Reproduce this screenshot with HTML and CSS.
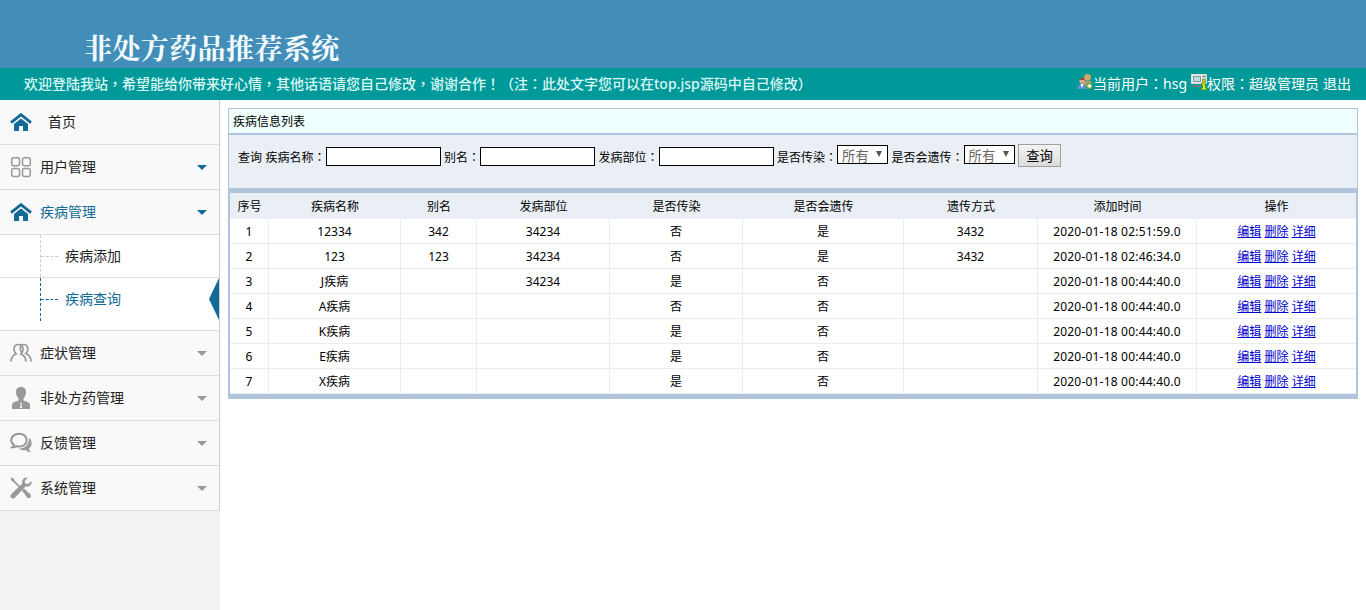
FILE: index.html
```
<!DOCTYPE html>
<html lang="zh-CN">
<head>
    <meta charset="UTF-8">
    <title>非处方药品推荐系统</title>
    <link rel="stylesheet" href="styles.css">
</head>
<body>
    <svg class="symbols" width="0" height="0">
        <symbol id="home" viewBox="0 0 22 18">
            <path d="M1 9.6 11 1.6l10 8" fill="none" stroke="currentColor" stroke-width="2.8"/>
            <path d="M11 5.6 18 11v7h-5v-5H9v5H4v-7z" fill="currentColor"/>
        </symbol>
    </svg>

    <div class="header">
        <h1>非处方药品推荐系统</h1>
    </div>
    <div class="topbar">
        <div class="welcome">欢迎登陆我站<i>，</i>希望能给你带来好心情<i>，</i>其他话语请您自己修改<i>，</i>谢谢合作<i>！</i><i>（</i>注<i>：</i>此处文字您可以在top.jsp源码中自己修改<i>）</i></div>
        <div class="user">
            <svg width="16" height="16" viewBox="0 0 16 16">
                <circle cx="10.5" cy="3.3" r="3.3" fill="#d9a566"/>
                <path d="M6 13V9q0-2.500 3-2.500h3q3 0 3 3V13z" fill="#a9a060"/>
                <circle cx="5" cy="7" r="2.600" fill="#e3a58c"/>
                <path d="M2.500 6q.5-2.500 2.500-2.500T7.500 6z" fill="#9c4a32"/>
                <path d="M.5 15q0-5 4.500-5t4.500 5z" fill="#5b8fd6"/>
                <path d="m3.500 10 1.500 4 1.500-4z" fill="#fff"/>
                <circle cx="12.500" cy="12" r="3.200" fill="#62a532"/>
                <path d="M12.500 10v4m-2-2h4" stroke="#fff" stroke-width="1.400"/>
            </svg><span>当前用户<i>：</i>hsg</span>
            <svg class="pc" width="16" height="16" viewBox="0 0 16 16">
                <path d="M.5.5h15v9H.5z" fill="#eee" stroke="#ddd"/>
                <path d="M2 2h8v6H2z" fill="#7d99a8"/>
                <path d="M3 3h6v4H3z" fill="#c3dbe4"/>
                <path d="M11.500 2.500h3M1 12h9" stroke="#777" stroke-width="1.500"/>
                <path d="M11.500 5h3v3h-3zm-1 4h4v5h1v2h-5v-2h1v-3h-1z" fill="#d5e021" stroke="#55820d" stroke-width=".7"/>
            </svg><span>权限<i>：</i>超级管理员</span>
            <span class="exit">退出</span>
        </div>
    </div>

    <div class="wrap">
        <div class="sidebar">
            <ul class="menu">
                <li class="item active first">
                    <svg class="icon" width="22" height="18"><use href="#home"/></svg>
                    <span>首页</span>
                </li>
                <li class="item open">
                    <svg class="icon" width="22" height="22" viewBox="0 0 22 22" fill="none" stroke="currentColor" stroke-width="1.500">
                        <rect x="1.700" y="1.700" width="7.800" height="8" rx="2"/>
                        <rect x="12.500" y="1.700" width="7.800" height="8" rx="2"/>
                        <rect x="1.700" y="12.500" width="7.800" height="8" rx="2"/>
                        <rect x="12.500" y="12.500" width="7.800" height="8" rx="2"/>
                    </svg>
                    <span>用户管理</span><b class="arrow"></b>
                </li>
                <li class="item active open current">
                    <svg class="icon" width="22" height="18"><use href="#home"/></svg>
                    <span>疾病管理</span><b class="arrow"></b>
                </li>
            </ul>
            <ul class="submenu">
                <li>疾病添加</li>
                <li class="selected">疾病查询<b class="flag"></b></li>
            </ul>
            <ul class="menu">
                <li class="item">
                    <svg class="icon" width="22" height="20" viewBox="0 0 22 20" fill="none" stroke="currentColor" stroke-width="1.700">
                        <path d="M8.500 1.500c5.500 0 5.500 6.500 2.300 9.500 3.200 1.200 5 3.500 5 7.500M8.500 1.500C3 1.500 3 8 6.200 11 3 12.200 1 14.500 1 18.500"/>
                        <path d="M10.500 2.300c1-.6 2-.8 3-.8 5 0 5.500 6 2.300 9 3.500 1.500 5.200 4 5.200 8"/>
                        <path d="M12 2C9.500 4 9.700 7.500 12 10"/>
                    </svg>
                    <span>症状管理</span><b class="arrow"></b>
                </li>
                <li class="item">
                    <svg class="icon" width="22" height="22" viewBox="0 0 22 22" fill="currentColor">
                        <path d="M11 0c3.800 0 5.300 2.500 5 5.700-.2 2.500-1.200 4.300-2.500 5.600v2.200l4.500 1.700c1.600.7 2 1.800 2 3.300V22H2v-3.500c0-1.500.4-2.600 2-3.300l4.500-1.700v-2.200C7.200 10 6.200 8.200 6 5.700 5.700 2.500 7.200 0 11 0z"/>
                        <path d="M10.300 15.700h1.400v1l-.4.800.7 3.500h-2l.7-3.500-.4-.8z" fill="#fff"/>
                    </svg>
                    <span>非处方药管理</span><b class="arrow"></b>
                </li>
                <li class="item">
                    <svg class="icon" width="22" height="22" viewBox="0 0 23 22">
                        <path d="M9.500 1.300c4.700 0 8 2.900 8 6.700s-3.300 6.700-8 6.700c-1 0-2-.1-2.800-.4-1.100.9-2.500 1.300-4.200 1.200.9-.8 1.500-1.700 1.600-2.700C2.300 11.600 1.200 10 1.200 8c0-3.800 3.600-6.700 8.300-6.700z" fill="none" stroke="currentColor" stroke-width="2.200"/>
                        <path d="M20 5.500c3.800 3.500 3.300 8.700-.2 11.200.1 1.500.9 2.700 2 3.800-2.300.2-4-.6-5.300-2.100-2.800.5-5.500 0-7.500-1.700C15.500 17 20.200 12.500 20 5.500z" fill="currentColor"/>
                    </svg>
                    <span>反馈管理</span><b class="arrow"></b>
                </li>
                <li class="item">
                    <svg class="icon" width="22" height="22" viewBox="0 0 22 22" fill="currentColor">
                        <path d="m.5 1.500 1-1 2.500 1.300L5 4l5.500 5.600-1.200 1.200L3.800 5.200 1.800 4z"/>
                        <path d="M12 13.500 14 11.500l6.500 6q1 1.500-.2 3-1.500 1.200-3 .2z"/>
                        <path d="M21.500 4 18 7l-2.800-.6L14.700 4 18 .6C14 0 11.300 3 12.300 6.500L1.200 17.300c-1.300 1.500-.8 3 .2 3.700s2.300.8 3.500-.3L15.500 9.500C19.500 10 22.300 7.500 21.500 4z"/>
                    </svg>
                    <span>系统管理</span><b class="arrow"></b>
                </li>
            </ul>
        </div>

        <div class="content">
            <div class="panel">
                <div class="panel-title">疾病信息列表</div>
                <form class="search">
                    <span>查询</span>
                    <label>疾病名称<i>：</i><input type="text"></label>
                    <label>别名<i>：</i><input type="text"></label>
                    <label>发病部位<i>：</i><input type="text"></label>
                    <label>是否传染<i>：</i><span class="select">所有<em></em></span></label>
                    <label>是否会遗传<i>：</i><span class="select">所有<em></em></span></label>
                    <button type="button">查询</button>
                </form>
                <table>
                    <colgroup>
                        <col class="c-no"><col class="c-name"><col class="c-alias"><col class="c-part"><col class="c-part">
                        <col class="c-inherit"><col class="c-mode"><col class="c-time"><col>
                    </colgroup>
                    <tr><th>序号</th><th>疾病名称</th><th>别名</th><th>发病部位</th><th>是否传染</th><th>是否会遗传</th><th>遗传方式</th><th>添加时间</th><th>操作</th></tr>
                    <tr><td>1</td><td>12334</td><td>342</td><td>34234</td><td>否</td><td>是</td><td>3432</td><td class="time">2020-01-18 02:51:59.0</td><td><a href="#">编辑</a> <a href="#">删除</a> <a href="#">详细</a></td></tr>
                    <tr><td>2</td><td>123</td><td>123</td><td>34234</td><td>否</td><td>是</td><td>3432</td><td class="time">2020-01-18 02:46:34.0</td><td><a href="#">编辑</a> <a href="#">删除</a> <a href="#">详细</a></td></tr>
                    <tr><td>3</td><td>J疾病</td><td></td><td>34234</td><td>是</td><td>否</td><td></td><td class="time">2020-01-18 00:44:40.0</td><td><a href="#">编辑</a> <a href="#">删除</a> <a href="#">详细</a></td></tr>
                    <tr><td>4</td><td>A疾病</td><td></td><td></td><td>否</td><td>否</td><td></td><td class="time">2020-01-18 00:44:40.0</td><td><a href="#">编辑</a> <a href="#">删除</a> <a href="#">详细</a></td></tr>
                    <tr><td>5</td><td>K疾病</td><td></td><td></td><td>是</td><td>否</td><td></td><td class="time">2020-01-18 00:44:40.0</td><td><a href="#">编辑</a> <a href="#">删除</a> <a href="#">详细</a></td></tr>
                    <tr><td>6</td><td>E疾病</td><td></td><td></td><td>是</td><td>否</td><td></td><td class="time">2020-01-18 00:44:40.0</td><td><a href="#">编辑</a> <a href="#">删除</a> <a href="#">详细</a></td></tr>
                    <tr><td>7</td><td>X疾病</td><td></td><td></td><td>是</td><td>否</td><td></td><td class="time">2020-01-18 00:44:40.0</td><td><a href="#">编辑</a> <a href="#">删除</a> <a href="#">详细</a></td></tr>
                </table>
            </div>
        </div>
    </div>
</body>
</html>
```
FILE: styles.css
```
* {
    box-sizing: border-box;
}
body {
    margin: 0;
    height: 610px;
    display: flex;
    flex-direction: column;
    overflow: hidden;
    font: 12px "Noto Sans", "Noto Sans CJK SC", sans-serif;
    color: #000;
    background-color: #fff;
}
.symbols {
    position: absolute;
}
/* centred full-width punctuation */
i {
    display: inline-block;
    width: 1em;
    line-height: 1;
    font-style: normal;
    font-family: "Noto Sans CJK TC", sans-serif;
    text-spacing-trim: space-all;
}
.header {
    height: 68px;
    padding: 27px 0 0 84px;
    background-color: #438eb9;
}
h1 {
    margin: 0;
    font-family: "Noto Serif CJK SC", "Noto Sans CJK SC", serif;
    font-size: 28px;
    line-height: 40px;
    font-weight: bold;
    letter-spacing: 0.4px;
    color: #f4fcff;
}
.topbar {
    display: flex;
    justify-content: space-between;
    height: 32px;
    padding: 0 15px 0 24px;
    background-color: #009999;
    color: #fff;
    font-size: 14px;
    line-height: 32px;
    white-space: nowrap;
}
.welcome {
    color: #d9f7f5;
    font-weight: 500;
}
.user {
    display: flex;
}
.user svg {
    margin-top: 6px;
}
.user .pc {
    margin-left: 4px;
}
.exit {
    margin-left: 4px;
}
.wrap {
    display: flex;
    flex: 1;
}
.sidebar {
    width: 220px;
    background-color: #f2f2f2;
    font-size: 14px;
}
ul {
    margin: 0;
    padding: 0;
    list-style: none;
}
.item {
    display: flex;
    align-items: center;
    height: 45px;
    padding: 0 12px 0 10px;
    background-color: #f9f9f9;
    border-right: 1px solid #ccc;
    border-bottom: 1px solid #dcdcdc;
    color: #222;
}
.item span {
    margin-bottom: 2px;
}
.icon {
    flex: none;
    margin-right: 8px;
    margin-bottom: 1px;
    color: #999;
}
.active .icon {
    color: #126b96;
}
.first span {
    margin-left: 8px;
}
.current,
.current span {
    color: #126b96;
}
.arrow {
    margin-left: auto;
    border: 5px solid transparent;
    border-top-color: #999;
    border-bottom: 0;
}
.open .arrow {
    border-top-color: #126b96;
}
.submenu {
    height: 96px;
    background-color: #fff;
    border-right: 1px solid #ccc;
    border-bottom: 1px solid #dcdcdc;
}
.submenu li {
    position: relative;
    height: 43px;
    padding-left: 65px;
    line-height: 41px;
    border-bottom: 1px solid #dcdcdc;
    color: #222;
}
.submenu li.selected {
    border-bottom: 0;
    color: #126b96;
}
/* tree lines */
.submenu li::before {
    content: "";
    position: absolute;
    left: 40px;
    top: 0;
    height: 100%;
    border-left: 1px dashed #ccc;
}
.submenu li::after {
    content: "";
    position: absolute;
    left: 41px;
    top: 21px;
    width: 17px;
    border-top: 1px dashed #ccc;
}
.submenu .selected::before,
.submenu .selected::after {
    border-color: #126b96;
}
.flag {
    position: absolute;
    right: 0;
    top: 0;
    border: 20px solid transparent;
    border-width: 21px 10px 21px 0;
    border-right-color: #126b96;
}
.content {
    flex: 1;
    padding: 8px 8px 0;
}
.panel {
    border: 1px solid #b0c4de;
    border-bottom: 0;
}
.panel-title {
    height: 24px;
    padding-left: 4px;
    line-height: 25px;
    background-color: #f0ffff;
}
.search {
    display: flex;
    align-items: center;
    gap: 3.5px;
    height: 55px;
    padding: 0 9px 10px;
    border-top: 2px solid #b0c4de;
    background-color: #eaeff6;
}
.search label {
    display: flex;
    align-items: center;
}
.search input {
    width: 115px;
    height: 19px;
    border: 1px solid #000;
    background-color: #fff;
}
.select {
    display: flex;
    justify-content: space-between;
    width: 51px;
    height: 19px;
    margin-bottom: 4px;
    padding: 0 5px 0 4px;
    border: 1px solid #000;
    background-color: #fff;
    color: #666;
    font-size: 13.33px;
    line-height: 20px;
}
.select em {
    margin-top: 5px;
    height: 0;
    border: 3.5px solid transparent;
    border-top: 6px solid #555;
    border-bottom: 0;
}
.search button {
    width: 43px;
    height: 23px;
    margin-bottom: 2px;
    padding: 0;
    border: 1px solid #a0a0a0;
    background: linear-gradient(#f4f4f4, #dcdcdc);
    font: 13.33px "Noto Sans CJK SC", sans-serif;
    line-height: 21px;
}
table {
    width: 100%;
    table-layout: fixed;
    border-collapse: separate;
    border-spacing: 0;
    border: 1px solid #b0c4de;
    border-width: 5px 1px;
    background-color: #fff;
}
.c-no { width: 39px; }
.c-name { width: 132px; }
.c-alias { width: 76px; }
.c-part { width: 133px; }
.c-inherit { width: 161px; }
.c-mode { width: 134px; }
.c-time { width: 159px; }
th,
td {
    height: 25px;
    padding: 2px 0 0;
    line-height: 22px;
    text-align: center;
    border-right: 1px solid #e8edf0;
    border-bottom: 1px solid #e8edf0;
}
th {
    height: 26px;
    font-weight: normal;
    background-color: #eaeff6;
    border: 0;
}
td:last-child {
    border-right: 0;
}
.time {
    letter-spacing: 0.2px;
}
a {
    color: #0000cc;
}
```
